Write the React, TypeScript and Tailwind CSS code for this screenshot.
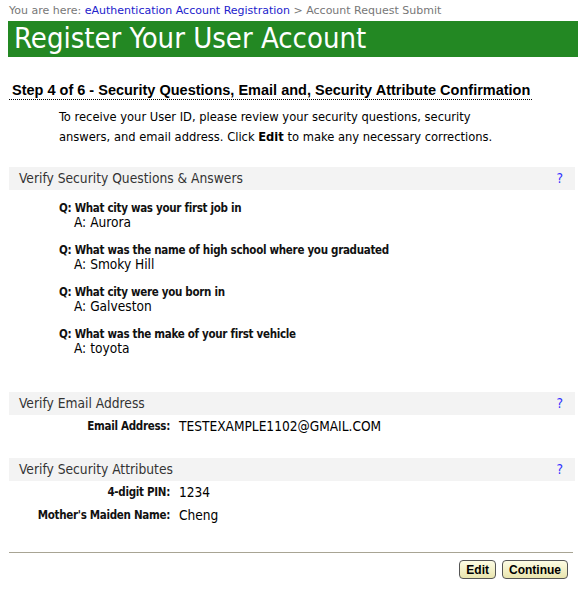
const body = { fontFamily: '"DejaVu Sans Condensed", "DejaVu Sans", sans-serif' }
const arial = { fontFamily: '"Liberation Sans", Arial, sans-serif' }

const questions = [
  { q: 'What city was your first job in', a: 'Aurora' },
  { q: 'What was the name of high school where you graduated', a: 'Smoky Hill' },
  { q: 'What city were you born in', a: 'Galveston' },
  { q: 'What was the make of your first vehicle', a: 'toyota' },
]

function SectionBar({ title }: { title: string }) {
  return (
    <div className="ml-[9px] mr-[3px] flex h-[23px] items-center justify-between bg-[#f3f3f3] pl-[10px] pr-[12px] text-[13.7px] text-[#333]">
      <span>{title}</span>
      <span className="text-[#3333ff]">?</span>
    </div>
  )
}

function Row({ label, value }: { label: string; value: string }) {
  return (
    <div className="flex h-[23px] items-center">
      <span className="w-[170px] text-right text-[11.5px] font-bold tracking-[-0.3px] text-[#111]">{label}</span>
      <span className="ml-[9px] text-[13.6px] text-black">{value}</span>
    </div>
  )
}

export default function App() {
  return (
    <div className="min-h-[592px] w-[578px] bg-white" style={body}>
      {/* breadcrumb */}
      <div className="h-[21px] pl-[9px] pt-[4px] text-[11px] leading-[14px] text-[#777]" style={{ fontFamily: '"DejaVu Sans", Verdana, sans-serif' }}>
        You are here: <span className="text-[#2222cc]">eAuthentication Account Registration</span> &gt; Account Request Submit
      </div>

      <div className="ml-[8px] flex h-[36px] items-center bg-[#238823] pl-[6px] text-[29px] text-white">
        Register Your User Account
      </div>

      <div className="mt-[21px] pl-[9px]">
        <h2 className="inline-block border-b border-dotted border-black pl-[3px] pr-[2px] text-[14.5px] font-bold leading-[17px] text-black" style={arial}>
          Step 4 of 6 - Security Questions, Email and, Security Attribute Confirmation
        </h2>
      </div>

      <p className="mt-[5px] pl-[59px] text-[12.8px] leading-[20px] text-black">
        To receive your User ID, please review your security questions, security
        <br />
        answers, and email address. Click <b>Edit</b> to make any necessary corrections.
      </p>

      <div className="mt-[20px]">
        <SectionBar title="Verify Security Questions & Answers" />
      </div>

      <div className="mt-[11px] flex flex-col gap-[14px] pl-[59px] leading-[14px]">
        {questions.map((item) => (
          <div key={item.q}>
            <div className="text-[11.5px] font-bold tracking-[-0.3px] text-[#111]">Q: {item.q}</div>
            <div className="pl-[15px] text-[13.6px] text-black">A: {item.a}</div>
          </div>
        ))}
      </div>

      <div className="mt-[37px]">
        <SectionBar title="Verify Email Address" />
        <Row label="Email Address:" value="TESTEXAMPLE1102@GMAIL.COM" />
      </div>

      <div className="mt-[20px]">
        <SectionBar title="Verify Security Attributes" />
        <Row label="4-digit PIN:" value="1234" />
        <Row label="Mother's Maiden Name:" value="Cheng" />
      </div>

      <div className="ml-[9px] mr-[5px] mt-[25px] border-t border-[#a8a494]" />

      <div className="mt-[7px] flex justify-end gap-[6px] pr-[10px]" style={arial}>
        <button className="h-[19px] rounded-[4px] border border-[#555] bg-gradient-to-b from-[#fdfce4] to-[#e9e5ae] px-[6px] text-[12px] leading-[16px] font-bold text-black">
          Edit
        </button>
        <button className="h-[19px] rounded-[4px] border border-[#555] bg-gradient-to-b from-[#fdfce4] to-[#e9e5ae] px-[6px] text-[12px] leading-[16px] font-bold text-black">
          Continue
        </button>
      </div>
    </div>
  )
}
